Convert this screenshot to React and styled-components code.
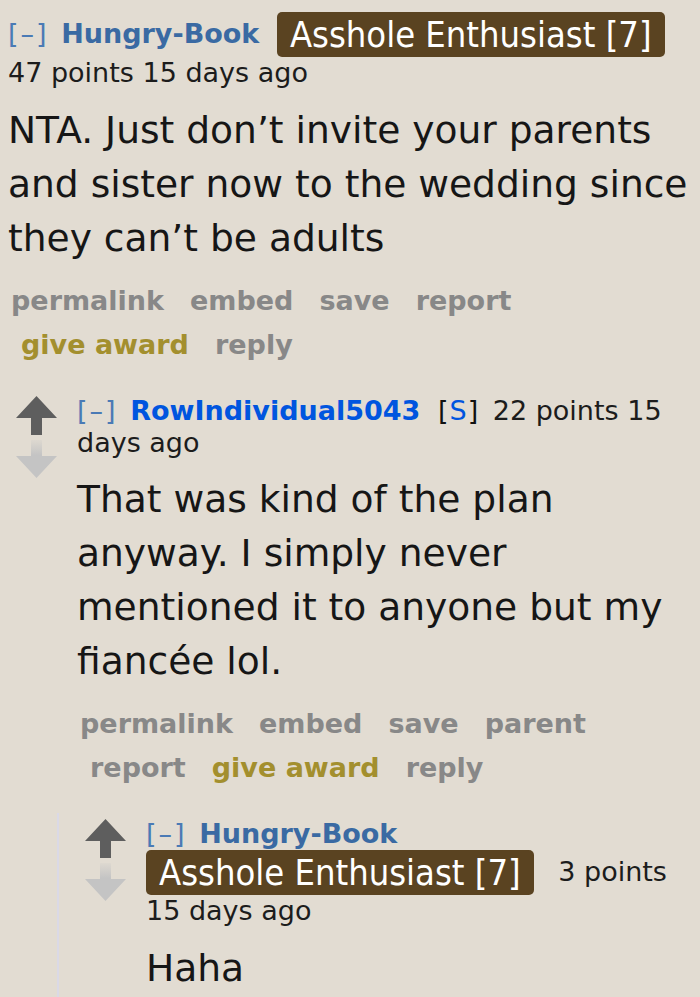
import React from 'react';
import styled, { createGlobalStyle } from 'styled-components';

const GlobalStyle = createGlobalStyle`
  html, body {
    margin: 0;
    padding: 0;
    overflow: hidden;
    background: #e2dcd2;
  }
  body {
    font-family: "DejaVu Sans", Verdana, sans-serif;
  }
`;

const Page = styled.div`
  padding: 12px 0 0 8px;
  height: 985px;
`;

const CommentBox = styled.div`
  display: grid;
  grid-template-columns: ${(p) => (p.$voted ? '41px 1fr' : '1fr')};
  padding-top: ${(p) => (p.$voted ? '5px' : '0')};
`;

const Votes = styled.div`
  display: flex;
  flex-direction: column;
  gap: 5px;
  padding-top: 1px;
`;

const Entry = styled.div`
  padding-left: ${(p) => (p.$voted ? '20px' : '0')};
  min-width: 0;
`;

const Tagline = styled.div`
  font-size: 27px;
  line-height: 32px;
  color: #1c1c1c;
`;

const Expand = styled.span`
  color: #4a7ab5;
  letter-spacing: 2px;
  margin-right: 4px;
`;

const Author = styled.span`
  font-weight: bold;
  color: ${(p) => (p.$submitter ? '#0055df' : '#3a6aa3')};
  margin-right: 9px;
`;

const SubmitterTag = styled.span`
  color: #111;
  letter-spacing: 1px;
  margin-right: 5px;
  & b {
    font-weight: normal;
    color: #0055df;
  }
`;

const Score = styled.span`
  white-space: nowrap;
`;

const Flair = styled.span`
  display: inline-block;
  vertical-align: -4px;
  background: #5a4321;
  color: #fff;
  font-family: "DejaVu Sans Condensed", "DejaVu Sans", sans-serif;
  font-stretch: condensed;
  font-size: 36px;
  line-height: 45px;
  padding: 0 13px;
  border-radius: 5px;
  margin-right: 16px;
  white-space: nowrap;
`;

const Body = styled.div`
  margin-top: 13.5px;
  font-size: 37.6px;
  line-height: 54px;
  color: #161616;
`;

const Actions = styled.ul`
  list-style: none;
  margin: 14px 0 0;
  padding: 0;
  display: flex;
  flex-wrap: wrap;
  font-size: 27px;
  line-height: 44px;
  font-weight: bold;
`;

const ActionItem = styled.li`
  padding: 0 10px;
  &:first-child {
    padding-left: 0;
  }
`;

const ActionLink = styled.span`
  padding: 0 3px;
  color: ${(p) => (p.$gold ? '#a38f2e' : '#888')};
`;

const Children = styled.div`
  margin-top: 23px;
  grid-column: ${(p) => (p.$line ? '2' : 'auto')};
  margin-left: ${(p) => (p.$line ? '0' : '8px')};
  border-left: ${(p) => (p.$line ? '2px solid #dad9e6' : 'none')};
  padding-left: ${(p) => (p.$line ? '26px' : '0')};
  min-height: ${(p) => (p.$line ? '184px' : '0')};
`;

const UpArrow = () => (
  <svg width="41" height="39" viewBox="0 0 41 39">
    <path d="M20.5 0 L41 22 L26 22 L26 39 L15 39 L15 22 L0 22 Z" fill="#5e5e5e" />
  </svg>
);

const DownArrow = () => (
  <svg width="41" height="38" viewBox="0 0 41 38">
    <defs>
      <linearGradient id="downFade" x1="0" y1="0" x2="0" y2="1">
        <stop offset="0" stopColor="#c4c4c4" stopOpacity="0.15" />
        <stop offset="0.4" stopColor="#c4c4c4" stopOpacity="1" />
        <stop offset="1" stopColor="#c4c4c4" stopOpacity="1" />
      </linearGradient>
    </defs>
    <path d="M15 0 L26 0 L26 16 L41 16 L20.5 38 L0 16 L15 16 Z" fill="url(#downFade)" />
  </svg>
);

function ActionList({ items }) {
  return (
    <Actions>
      {items.map((item) => (
        <ActionItem key={item}>
          <ActionLink $gold={item === 'give award'}>{item}</ActionLink>
        </ActionItem>
      ))}
    </Actions>
  );
}

export default function App() {
  return (
    <>
      <GlobalStyle />
      <Page>
        <CommentBox>
          <Entry>
            <Tagline>
              <Expand>[–]</Expand> <Author>Hungry-Book</Author>{' '}
              <Flair>Asshole Enthusiast [7]</Flair>
              <Score>47 points</Score> 15 days ago
            </Tagline>
            <Body>
              NTA. Just don’t invite your parents and sister now to the wedding since they can’t be adults
            </Body>
            <ActionList items={['permalink', 'embed', 'save', 'report', 'give award', 'reply']} />
          </Entry>

          <Children>
            <CommentBox $voted>
              <Votes>
                <UpArrow />
                <DownArrow />
              </Votes>
              <Entry $voted>
                <Tagline>
                  <Expand>[–]</Expand> <Author $submitter>RowIndividual5043</Author>{' '}
                  <SubmitterTag>
                    [<b>S</b>]
                  </SubmitterTag>{' '}
                  <Score>22 points</Score> 15 days ago
                </Tagline>
                <Body>
                  That was kind of the plan anyway. I simply never mentioned it to anyone but my fiancée lol.
                </Body>
                <ActionList
                  items={['permalink', 'embed', 'save', 'parent', 'report', 'give award', 'reply']}
                />
              </Entry>

              <Children $line>
                <CommentBox $voted>
                  <Votes>
                    <UpArrow />
                    <DownArrow />
                  </Votes>
                  <Entry $voted>
                    <Tagline>
                      <Expand>[–]</Expand> <Author>Hungry-Book</Author>{' '}
                      <Flair>Asshole Enthusiast [7]</Flair> <Score>3 points</Score> 15 days ago
                    </Tagline>
                    <Body>Haha</Body>
                  </Entry>
                </CommentBox>
              </Children>
            </CommentBox>
          </Children>
        </CommentBox>
      </Page>
    </>
  );
}
